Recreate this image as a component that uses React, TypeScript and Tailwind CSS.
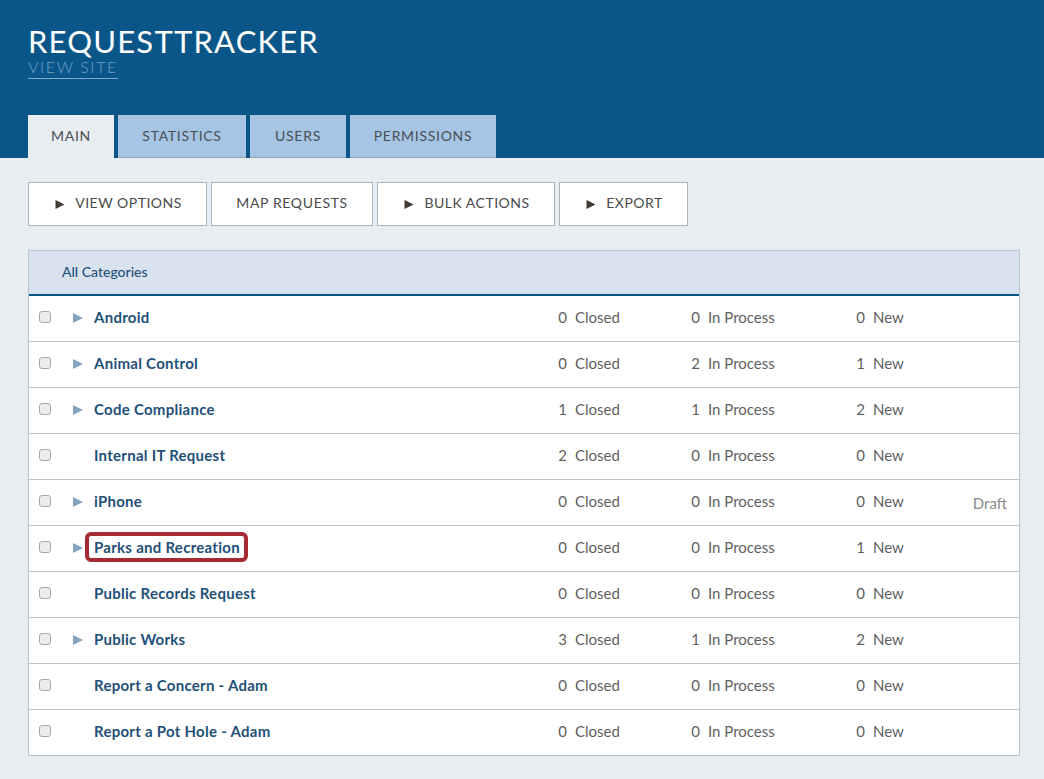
const rows = [
  { name: "Android", arrow: true, closed: 0, process: 0, fresh: 0 },
  { name: "Animal Control", arrow: true, closed: 0, process: 2, fresh: 1 },
  { name: "Code Compliance", arrow: true, closed: 1, process: 1, fresh: 2 },
  { name: "Internal IT Request", arrow: false, closed: 2, process: 0, fresh: 0 },
  { name: "iPhone", arrow: true, closed: 0, process: 0, fresh: 0, draft: true },
  { name: "Parks and Recreation", arrow: true, closed: 0, process: 0, fresh: 1, marked: true },
  { name: "Public Records Request", arrow: false, closed: 0, process: 0, fresh: 0 },
  { name: "Public Works", arrow: true, closed: 3, process: 1, fresh: 2 },
  { name: "Report a Concern - Adam", arrow: false, closed: 0, process: 0, fresh: 0 },
  { name: "Report a Pot Hole - Adam", arrow: false, closed: 0, process: 0, fresh: 0 },
]

const tabs = [
  { label: "MAIN", width: "w-[86px]", active: true },
  { label: "STATISTICS", width: "w-[128px]" },
  { label: "USERS", width: "w-[96px]" },
  { label: "PERMISSIONS", width: "w-[146px]" },
]

const actions = [
  { label: "VIEW OPTIONS", width: "w-[179px]", arrow: true },
  { label: "MAP REQUESTS", width: "w-[162px]" },
  { label: "BULK ACTIONS", width: "w-[178px]", arrow: true },
  { label: "EXPORT", width: "w-[129px]", arrow: true },
]

function Triangle({ className }: { className: string }) {
  return (
    <svg viewBox="0 0 10 10" className={className} fill="currentColor">
      <path d="M0 0 L10 5 L0 10 Z" />
    </svg>
  )
}

function Count({ value, label, width }: { value: number; label: string; width: string }) {
  return (
    <div className={`flex ${width} pt-[2px] text-[15px] text-[#5f5f5f]`}>
      <span className="w-[9px] text-right">{value}</span>
      <span className="ml-[8px]">{label}</span>
    </div>
  )
}

export default function App() {
  return (
    <div className="min-h-[779px] bg-[#e8edf2] font-['Lato','Open_Sans',sans-serif]">
      <header className="h-[158px] bg-[#0b5689] px-[28px] pt-[24px] flex flex-col">
        <h1 className="text-[31px] leading-[34px] text-white tracking-[1.2px]">REQUESTTRACKER</h1>
        <a className="self-start w-[90px] text-[16px] leading-[18px] tracking-[1.6px] text-[#6fa0c8] border-b border-[#7ea9cc] pb-[2px] font-light">
          VIEW SITE
        </a>
        <nav className="flex gap-[4px] mt-auto">
          {tabs.map((tab) => (
            <div
              key={tab.label}
              className={`${tab.width} h-[43px] flex items-center justify-center pb-[2px] text-[14px] tracking-[0.7px] text-[#4a4f55] ${
                tab.active ? "bg-[#e8edf2]" : "bg-[#a6c4e4] border-b border-[#8fa5bb]"
              }`}
            >
              {tab.label}
            </div>
          ))}
        </nav>
      </header>

      <main className="px-[24px] pl-[28px] pt-[24px]">
        <div className="flex gap-[4px]">
          {actions.map((action) => (
            <button
              key={action.label}
              className={`${action.width} h-[44px] flex items-center justify-center pb-[3px] bg-white border border-[#a9b4bf] text-[14px] text-[#4a4a4a] ${
                action.arrow ? "pl-[2px] tracking-[0.5px]" : "tracking-[0.65px]"
              }`}
            >
              {action.arrow && <Triangle className="mr-[10px] mt-[3px] w-[10px] h-[9px] text-[#403a32]" />}
              {action.label}
            </button>
          ))}
        </div>

        <section className="mt-[24px] w-[992px] border border-[#b8c4d2] bg-white">
          <div className="h-[45px] flex items-center pl-[33px] pb-[2px] bg-[#d9e3f0] border-b-2 border-[#0b5689] text-[14px] font-medium text-[#1f5078]">
            All Categories
          </div>
          {rows.map((row, i) => (
            <div
              key={row.name}
              className={`relative flex items-center pb-[4px] ${
                i < rows.length - 1 ? "h-[46px] border-b border-[#bcc5d0]" : "h-[45px]"
              }`}
            >
              <span className="ml-[10px] w-[12px] h-[12px] rounded-[3px] border border-[#a8a8a8] bg-[#ececec]"></span>
              <span className="ml-[22px] w-[21px] mt-[2px]">
                {row.arrow && <Triangle className="w-[10px] h-[10px] text-[#85a4c0]" />}
              </span>
              <span className="w-[464px] pt-[2px] text-[15px] font-bold tracking-[0.27px] text-[#1f5078]">
                <span className={row.marked ? "relative" : ""}>
                  {row.name}
                  {row.marked && (
                    <span className="absolute -left-[9px] -right-[8px] -top-[6px] -bottom-[6px] rounded-[6px] border-[4px] border-[#a52a33]"></span>
                  )}
                </span>
              </span>
              <Count value={row.closed} label="Closed" width="w-[133px]" />
              <Count value={row.process} label="In Process" width="w-[165px]" />
              <Count value={row.fresh} label="New" width="w-[100px]" />
              {row.draft && <span className="absolute right-[12px] top-[12px] text-[15px] text-[#8a8a8a]">Draft</span>}
            </div>
          ))}
        </section>
      </main>
    </div>
  )
}
